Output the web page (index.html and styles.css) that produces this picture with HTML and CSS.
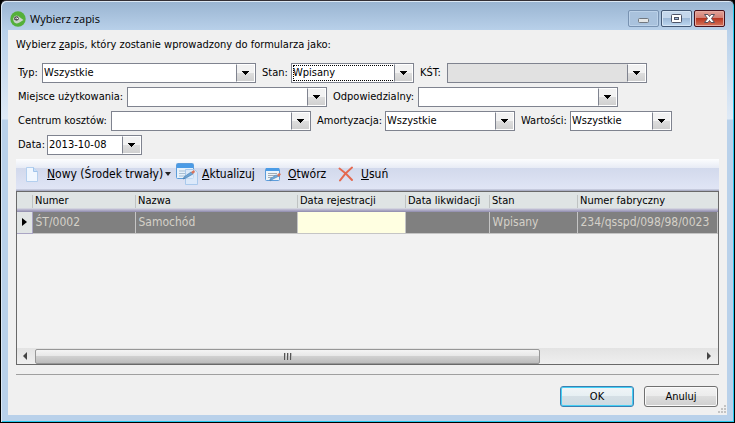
FILE: index.html
```html
<!DOCTYPE html>
<html lang="pl">
<head>
<meta charset="utf-8">
<title>Wybierz zapis</title>
<link rel="stylesheet" href="styles.css">
</head>
<body>
<div class="window">
  <header class="titlebar">
    <svg class="app-icon" viewBox="0 0 16 16" aria-hidden="true"><circle cx="8" cy="8" r="7.700" fill="#54b03a"/><path d="M3 7.500Q5 3.500 8 5l5.500 4-4 2.500Q5 14 3.500 10z" fill="#c9d3c9"/><path d="M4 8.500Q4 4.500 8 5.500L9 8Q7 11 4 8.500z" fill="#555"/><path d="M5.500 7.500Q7 6 8 8" fill="none" stroke="#fff"/></svg>
    <h1 class="title">Wybierz zapis</h1>
    <div class="controls">
      <button class="ctl ctl-dim" aria-label="Minimalizuj"><svg viewBox="0 0 31 17"><rect x="10.500" y="8.500" width="10" height="4" rx="1" fill="#e4e6e6" stroke="#70777f"/></svg></button>
      <button class="ctl" aria-label="Maksymalizuj"><svg viewBox="0 0 31 17"><rect x="10.500" y="4.500" width="10" height="8" rx="1" fill="#fff" stroke="#4d5468"/><rect x="13.500" y="7.500" width="4" height="2" fill="#9db8d8" stroke="#4d5468"/></svg></button>
      <button class="ctl ctl-close" aria-label="Zamknij"><svg viewBox="0 0 31 17"><path d="M10.500 4.500h3.500l1.500 2 1.500-2h3.500l-3 4 3 4h-3.500l-1.500-2-1.500 2h-3.500l3-4z" fill="#fff" stroke="#56515d" stroke-linejoin="round"/></svg></button>
    </div>
  </header>
  <main class="client">
    <p class="intro">Wybierz <u>z</u>apis, który zostanie wprowadzony do formularza jako:</p>
    <form class="filters">
      <div class="row">
        <div class="field"><label class="l-type" for="typ">Typ:</label><span class="combo w-type"><select id="typ"><option>Wszystkie</option></select></span></div>
        <div class="field"><label class="l-state" for="stan">Stan:</label><span class="combo w-state focused"><select id="stan"><option>Wpisany</option></select></span></div>
        <div class="field"><label class="l-kst" for="kst">KŚT:</label><span class="combo w-wide off"><select id="kst"><option></option></select></span></div>
      </div>
      <div class="row">
        <div class="field"><label class="l-place" for="miejsce">Miejsce użytkowania:</label><span class="combo w-wide"><select id="miejsce"><option></option></select></span></div>
        <div class="field"><label class="l-resp" for="odp">Odpowiedzialny:</label><span class="combo w-wide"><select id="odp"><option></option></select></span></div>
      </div>
      <div class="row">
        <div class="field"><label class="l-cost" for="centrum">Centrum kosztów:</label><span class="combo w-wide"><select id="centrum"><option></option></select></span></div>
        <div class="field"><label class="l-amort" for="amort">Amortyzacja:</label><span class="combo w-amort"><select id="amort"><option>Wszystkie</option></select></span></div>
        <div class="field"><label class="l-value" for="wart">Wartości:</label><span class="combo w-value"><select id="wart"><option>Wszystkie</option></select></span></div>
      </div>
      <div class="row">
        <div class="field"><label class="l-state" for="data">Data:</label><span class="combo w-date"><select id="data"><option>2013-10-08</option></select></span></div>
      </div>
    </form>
    <div class="toolbar" role="toolbar">
      <button class="tool t-new"><svg class="icon" viewBox="0 0 16 16"><path d="M2.500 1.500h7l4 4v10h-11z" fill="#f0f7ff" stroke="#b3cfee"/><path d="M9.500 1.500v4h4" fill="#c9e0f8" stroke="#a0c3ea"/></svg><span><u>N</u>owy (Środek trwały)</span><i class="caret"></i></button>
      <button class="tool t-refresh"><svg class="icon-big" viewBox="0 0 22 22"><rect x=".5" y=".5" width="17" height="15" rx="1" fill="#e6f1fb" stroke="#5d9ddb"/><path d="M1 1h16v4H1z" fill="#4a9be6"/><path d="M3 8h11M3 10.500h9M3 13h8" stroke="#a9bfd2"/><path d="M9.500 6.500h9l3 3v12h-12z" fill="#dcebfb" fill-opacity=".8" stroke="#a9c9ec"/><path d="M8 14l7-5 2 2-7 4-3 1z" fill="#6fa5d5" stroke="#477ba9" stroke-width=".6"/><path d="M15 9l3-2 1 2-2 2z" fill="#d9735a"/></svg><span><u>A</u>ktualizuj</span></button>
      <button class="tool t-open"><svg class="icon" viewBox="0 0 16 16"><rect x=".5" y="2.500" width="14" height="12" rx="1" fill="#edf4fa" stroke="#5d9ddb"/><path d="M1 2h13v3H1z" fill="#4a9be6"/><path d="M3 7.500h9M3 9.500h7M3 11.500h4" stroke="#a3acb5"/><path d="M5 13l6-4 3 1-6 3-3 2z" fill="#72acdc" stroke="#477ba9" stroke-width=".6"/><path d="M12 9l2-2 2 1-2 3z" fill="#d9735a"/></svg><span><u>O</u>twórz</span></button>
      <button class="tool"><svg class="icon" viewBox="0 0 16 16"><path d="M1.500 2.500Q8 7 14 14M14 1.500Q7 7 2 14.500" fill="none" stroke="#e4694f" stroke-width="2" stroke-linecap="round"/></svg><span><u>U</u>suń</span></button>
    </div>
    <section class="grid">
      <table>
        <colgroup><col class="c-mark"><col class="c-num"><col class="c-name"><col class="c-reg"><col class="c-liq"><col class="c-state"><col></colgroup>
        <thead><tr><th></th><th>Numer</th><th>Nazwa</th><th>Data rejestracji</th><th>Data likwidacji</th><th>Stan</th><th>Numer fabryczny</th></tr></thead>
        <tbody><tr><td class="mark"><i class="pointer"></i></td><td>ŚT/0002</td><td>Samochód</td><td class="required"></td><td></td><td>Wpisany</td><td>234/qsspd/098/98/0023</td></tr></tbody>
      </table>
      <div class="scrollbar">
        <i class="arrow arrow-left"></i>
        <div class="track"><div class="thumb"><i class="ridges"></i></div></div>
        <i class="arrow arrow-right"></i>
      </div>
    </section>
    <footer class="footer">
      <button class="btn btn-default">OK</button>
      <button class="btn">Anuluj</button>
      <svg class="grip" viewBox="0 0 9 9" aria-hidden="true"><path d="M6 0h2v2H6zM3 3h2v2H3zM6 3h2v2H6zM0 6h2v2H0zM3 6h2v2H3zM6 6h2v2H6z" fill="#c3c3c3"/></svg>
    </footer>
  </main>
</div>
</body>
</html>
```
FILE: styles.css
```css
* { box-sizing: border-box; }
body {
  margin: 0;
  background: #000;
  color: #000;
  font: 11px/14px "DejaVu Sans Condensed", "DejaVu Sans", sans-serif;
  font-stretch: condensed;
}
h1, p { margin: 0; font-weight: normal; }
button, select { font: inherit; color: inherit; }
i { display: block; flex: none; }

.window {
  display: flex;
  flex-direction: column;
  min-height: 100vh;
  padding: 0 6px 6px;
  border: 1px solid #000;
  border-top-color: #332f35;
  border-radius: 6px 6px 0 0;
  background: linear-gradient(#99b4d1, #b9d1ea 30px, #dfeaf6 118px, #b9d1ea 119px);
  box-shadow: inset 1px 1px #dce8f4, inset -1px -1px #25c8ee;
}
.titlebar {
  display: flex;
  align-items: center;
  height: 29px;
  padding: 0 3px 0 3px;
}
.app-icon { width: 16px; height: 16px; margin-top: 6px; }
.title {
  flex: 1;
  margin: 6px 0 0 4px;
  font: 11px/16px "Open Sans", sans-serif;
}
.controls { display: flex; gap: 2px; padding-top: 6px; }
.ctl {
  width: 31px;
  height: 17px;
  padding: 0;
  border: 1px solid #435875;
  border-radius: 2px;
  background: linear-gradient(#c4d7ec 50%, #9db9d8 50%, #bdd7f0);
  box-shadow: inset 0 0 0 1px #d5e5f5;
}
.ctl svg { display: block; width: 31px; height: 17px; margin: -1px; }
.ctl-dim { border-color: #7892b1; background: #a9c2dd; box-shadow: inset 0 0 0 1px #bcd2e9; }
.ctl-close {
  border-color: #48111c;
  background: linear-gradient(#e3a298, #d27c70 50%, #b93621 50%, #d6755c);
  box-shadow: inset 0 0 0 1px #e6aaa0;
}

.client {
  flex: 1;
  display: flex;
  flex-direction: column;
  margin: 0 1px 1px;
  padding: 8px 8px 0;
  background: #f0f0f0;
}
.filters { padding: 11px 2px 0; }
.row { display: flex; gap: 6px; height: 24px; }
.field { display: flex; align-items: flex-start; }
.field label { flex: none; line-height: 20px; white-space: nowrap; }
.l-type { width: 24px; }
.l-state { width: 29px; }
.l-kst { width: 27px; }
.l-place { width: 109px; }
.l-resp { width: 85px; }
.l-cost { width: 93px; }
.l-amort { width: 68px; }
.l-value { width: 49px; }
.combo { position: relative; height: 20px; }
.w-type { width: 214px; }
.w-state { width: 123px; }
.w-wide { width: 200px; }
.w-amort { width: 130px; }
.w-value { width: 102px; }
.w-date { width: 95px; }
.combo select {
  display: block;
  appearance: none;
  width: 100%;
  height: 20px;
  padding: 0 18px 0 1px;
  border: 1px solid #7f838f;
  border-radius: 0;
  outline: none;
  background: #fff;
}
.combo::after {
  content: "";
  position: absolute;
  inset: 1px 1px 1px auto;
  width: 17px;
  border: 1px solid #fff;
  border-left-color: #7f838f;
  background:
    linear-gradient(#000, #000) center 6px / 7px 1px no-repeat,
    linear-gradient(#000, #000) center 7px / 5px 1px no-repeat,
    linear-gradient(#000, #000) center 8px / 3px 1px no-repeat,
    linear-gradient(#000, #000) center 9px / 1px 1px no-repeat,
    linear-gradient(#f2f2f2 50%, #dedede 50%, #d0d0d0);
  pointer-events: none;
}
.off select { background: #e1e1e1; }
.focused::before {
  content: "";
  position: absolute;
  inset: 2px 19px 2px 2px;
  border: 1px dotted #000;
  pointer-events: none;
}

.toolbar {
  display: flex;
  height: 32px;
  padding: 0 8px 2px;
  background: linear-gradient(#fcfdfe, #e7ebf5 9px, #d2d9ec 9px, #e0e5f5 30px, #abafc5 31px);
}
.tool {
  display: flex;
  align-items: center;
  padding: 0;
  border: 0;
  background: none;
  font-size: 12px;
  white-space: nowrap;
}
.t-new { width: 152px; }
.t-refresh { width: 89px; }
.t-open { width: 73px; }
.icon { width: 16px; height: 16px; margin-right: 7px; }
.icon-big { width: 22px; height: 22px; margin-right: 4px; }
.caret { margin-left: 2px; border: 3px solid transparent; border-top: 4px solid #222; border-bottom: 0; }

.grid {
  flex: 1;
  display: flex;
  flex-direction: column;
  border: 1px solid #696969;
  background: #f2f2f2;
}
table { width: 100%; border-collapse: collapse; table-layout: fixed; }
.c-mark { width: 15px; }
.c-num { width: 103px; }
.c-name { width: 162px; }
.c-reg { width: 108px; }
.c-liq { width: 84px; }
.c-state { width: 88px; }
th, td { padding: 0 0 0 3px; text-align: left; white-space: nowrap; overflow: hidden; }
th {
  height: 20px;
  padding-bottom: 3px;
  background:
    linear-gradient(#bfc3c3, #bfc3c3) left 3px / 1px 13px no-repeat,
    linear-gradient(#dfe4e4 16px, #c5c3d8 17px, #8e8aac);
  font-weight: normal;
}
th:first-child { background: linear-gradient(#dfe4e4 16px, #c5c3d8 17px, #8e8aac); }
td {
  height: 21px;
  border-right: 1px solid #c5c5c5;
  border-bottom: 1px solid #c5c5c5;
  background: #808080;
  color: #d4d0c8;
  font-size: 12px;
}
td.mark { padding-left: 5px; background: #e1e5e5; border-color: #aaa5c4; }
td.required { background: #ffffe1; }
.pointer { width: 0; border: 4px solid transparent; border-left: 5px solid #000; border-right: 0; }

.scrollbar {
  display: flex;
  align-items: center;
  height: 16px;
  margin-top: auto;
  background: linear-gradient(#e3e3e3, #efefef);
}
.arrow { width: 4px; height: 8px; border: 4px solid transparent; }
.arrow-left { margin: 0 8px 0 6px; border-left: 0; border-right-color: #444; }
.arrow-right { margin: 0 7px; border-right: 0; border-left-color: #444; }
.track { flex: 1; }
.thumb {
  display: flex;
  align-items: center;
  justify-content: center;
  width: 76%;
  height: 15px;
  border: 1px solid #979797;
  border-radius: 2px;
  background: linear-gradient(#f4f4f4, #e6e6e6 50%, #d0d0d0 50%, #bcbcbc);
}
.ridges { width: 8px; height: 7px; background: repeating-linear-gradient(90deg, #555 0 1px, #bbb 1px 2px, transparent 2px 3px); }

.footer {
  position: relative;
  display: flex;
  justify-content: flex-end;
  gap: 10px;
  height: 41px;
  margin-top: 9px;
  padding: 11px 1px 0 0;
  border-top: 1px solid #a0a0a0;
}
.btn {
  width: 74px;
  height: 21px;
  padding: 0;
  border: 1px solid #707070;
  border-radius: 3px;
  background: linear-gradient(#f3f3f3, #ebebeb 50%, #dddddd 50%, #cfcfcf);
  box-shadow: inset 0 0 0 1px #fafafa;
}
.btn-default {
  border-color: #3c7fb1;
  background: linear-gradient(#f1f5f7, #e6eff3 50%, #d5dfe5 50%, #cddbe2);
  box-shadow: inset 0 0 0 1px #45d0f5;
}
.grip { position: absolute; right: -8px; bottom: 1px; width: 9px; height: 9px; }
```
